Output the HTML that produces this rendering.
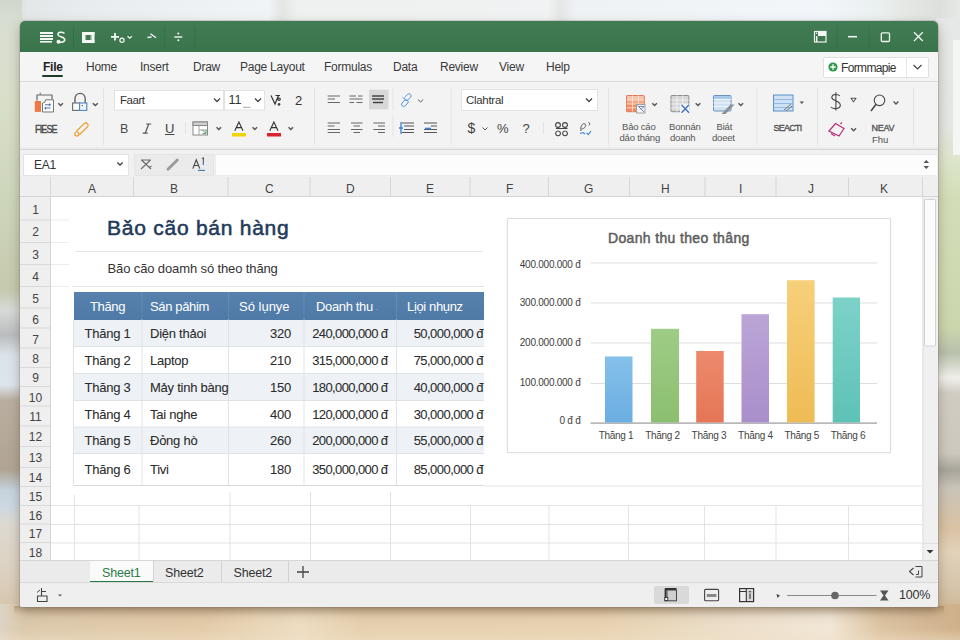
<!DOCTYPE html>
<html><head><meta charset="utf-8">
<style>
*{box-sizing:border-box;margin:0;padding:0}
html,body{width:960px;height:640px;overflow:hidden}
body{position:relative;font-family:"Liberation Sans",sans-serif;background:#e9ecea}
.a{position:absolute}
.t{position:absolute;white-space:nowrap;line-height:1}
svg{position:absolute;overflow:visible}
#win{position:absolute;left:20px;top:21px;width:918px;height:586px;background:#f3f3f3;border-radius:5px 5px 2px 2px;box-shadow:0 5px 12px rgba(70,50,30,.35),0 0 0 1px rgba(140,140,140,.30)}
.tab{font-size:12px;letter-spacing:-0.25px;color:#3a3a3a}
.sep{position:absolute;width:1px;background:#dcdcdc}
.gsep{position:absolute;width:1px;background:rgba(0,0,0,.12)}
.rb{font-size:12px;color:#333}
.sm{font-size:10px;color:#444}
.ch{font-size:12px;color:#555}
.hl{position:absolute;height:1px;background:#e2e2e2}
.vl{position:absolute;width:1px;background:#e2e2e2}
.rh{position:absolute;left:20px;width:31px;font-size:12px;color:#444;text-align:center;line-height:1}
.chd{position:absolute;top:183px;font-size:12px;color:#444;line-height:1}
.td{position:absolute;font-size:13px;letter-spacing:-0.25px;color:#2c2c2c;-webkit-text-stroke:0.08px #2c2c2c;line-height:1;white-space:nowrap}
.th{position:absolute;font-size:13px;letter-spacing:-0.35px;color:#fff;line-height:1;white-space:nowrap}
.yl{position:absolute;font-size:10px;letter-spacing:-0.25px;color:#3d3d3d;line-height:1;white-space:nowrap;text-align:right;width:80px}
.xl{position:absolute;font-size:10px;letter-spacing:-0.3px;color:#444;line-height:1;white-space:nowrap;text-align:center;width:50px}
.bar{position:absolute;width:28px}
</style></head><body>
<!-- background -->
<div class="a" style="left:0;top:0;width:960px;height:24px;background:linear-gradient(90deg,#cdd3ca 0,#d8ddd4 12px,#e4e7e8 28px,#eaedf0 100px,#f1f4f7 268px,#e3e6e3 282px,#eef1ef 298px,#f0f2f3 548px,#e4e7e5 560px,#eff2f4 576px,#f2f6fa 820px,#e9eeee 886px,#e6e9e6 900px,#dcdfdb 940px,#e6e9e6 960px)"></div>
<div class="a" style="left:0;top:0;width:22px;height:618px;background:linear-gradient(180deg,#d0d6cc 0,#d8ddd2 18px,#d9dfcf 58px,#d8dfc8 108px,#cdd6bb 198px,#c6caae 290px,#d6dad8 310px,#babdbe 335px,#dbe3ea 355px,#dde5ec 385px,#b9afa0 400px,#b0a594 470px,#c5d3de 490px,#cbd8e2 505px,#ddd9d0 525px,#dcd2c2 570px,#d8c8b2 600px,#d8c6ab 618px)"></div>
<div class="a" style="left:936px;top:18px;width:24px;height:600px;background:linear-gradient(180deg,#e5e8e6 0,#e3e6e3 110px,#dde5cc 140px,#d3ddb8 180px,#cbd6ad 310px,#b8c0ac 335px,#f0f0ea 360px,#d0ccc2 375px,#cdc8bd 435px,#a8a59c 452px,#c9c3b8 470px,#d9c3a4 510px,#e2d2ba 535px,#d5c3aa 570px,#cfb48f 600px)"></div>
<div class="a" style="left:953px;top:40px;width:7px;height:115px;background:#f4f6f3"></div>
<div class="a" style="left:0;top:604px;width:960px;height:36px;background:linear-gradient(90deg,#ddd3c5 0,#dcc9ad 22px,#e3cba8 200px,#eeddc2 300px,#e6d0ae 360px,#e8d2b0 600px,#ebdcc5 700px,#f2e7d7 830px,#dcc4a2 880px,#cfb08a 960px)"></div>
<div class="a" style="left:14px;top:606px;width:930px;height:10px;background:linear-gradient(180deg,rgba(120,85,45,.32),rgba(120,85,45,.08) 60%,rgba(120,85,45,0))"></div>
<div class="a" style="left:0;top:628px;width:960px;height:12px;background:linear-gradient(180deg,rgba(235,215,185,0),rgba(240,225,200,.45))"></div>
<div id="win"></div>
<!-- title bar -->
<div class="a" style="left:20px;top:21px;width:918px;height:31px;background:linear-gradient(180deg,#417c54,#3a744b);border-radius:5px 5px 0 0"></div>
<!-- title icons -->
<svg style="left:0;top:0" width="960" height="60">
 <g fill="#f4f7f4">
  <rect x="40" y="32" width="13" height="2"/><rect x="40" y="35" width="13" height="2"/><rect x="40" y="38" width="13" height="2"/><rect x="40" y="41" width="12" height="1.6"/>
 </g>
 <path d="M64.5 33.5 C62 31.5 57.5 32 58 34.8 C58.5 37 64.8 36.8 64.8 39.8 C64.8 42.6 59.5 43 57.5 41.2 M58.5 40.5 a1.3 1.3 0 1 0 0.1 0" fill="none" stroke="#f4f7f4" stroke-width="1.5"/>
 <rect x="73" y="27" width="1" height="20" fill="#2f6640" opacity=".6"/>
 <g fill="#f4f7f4">
  <rect x="82" y="32" width="12.5" height="3"/><rect x="82" y="40" width="12.5" height="3"/><rect x="82" y="32" width="3" height="11"/><rect x="91.5" y="32" width="3" height="11"/><rect x="85" y="35" width="1.2" height="5" opacity=".5"/><rect x="90.3" y="35" width="1.2" height="5" opacity=".5"/>
 </g>
 <path d="M111 36.8 H119 M115 33 V40.6" stroke="#f4f7f4" stroke-width="1.8" fill="none"/>
 <circle cx="122" cy="40.2" r="2.1" fill="none" stroke="#f4f7f4" stroke-width="1.2"/>
 <path d="M127.5 36.3 L129.7 38.3 L131.8 36.3" stroke="#f4f7f4" stroke-width="1.2" fill="none"/>
 <path d="M147.5 37.5 L151.5 37 M150.5 33.8 L156 37.8" stroke="#f4f7f4" stroke-width="1.3" fill="none"/>
 <rect x="164" y="27" width="1" height="20" fill="#2f6640" opacity=".5"/>
 <path d="M174.3 37 H182.3" stroke="#f4f7f4" stroke-width="1.4"/>
 <circle cx="178.3" cy="33.6" r="1" fill="#f4f7f4"/><circle cx="178.3" cy="40.3" r="1" fill="#f4f7f4"/>
 <rect x="194.5" y="27" width="1" height="20" fill="#2f6640" opacity=".4"/>
 <!-- right -->
 <rect x="814.5" y="31.5" width="11.5" height="10.5" fill="none" stroke="#eef3ee" stroke-width="1.2"/>
 <rect x="818" y="31.5" width="8" height="4.5" fill="#f4f7f4"/>
 <rect x="816" y="36" width="1.4" height="6" fill="#f4f7f4"/>
 <circle cx="816.6" cy="33.3" r="0.8" fill="#f4f7f4"/>
 <rect x="836.5" y="26" width="1" height="22" fill="#2f6640" opacity=".4"/>
 <path d="M848 36.7 H857" stroke="#f1f5f1" stroke-width="1.6"/>
 <rect x="868.5" y="26" width="1" height="22" fill="#2f6640" opacity=".3"/>
 <rect x="881.3" y="32.8" width="8.2" height="8.7" rx="1" fill="none" stroke="#f1f5f1" stroke-width="1.3"/>
 <path d="M914 32.2 L922.8 41 M922.8 32.2 L914 41" stroke="#f1f5f1" stroke-width="1.3"/>
</svg>
<!-- tabs -->
<div class="a" style="left:20px;top:52px;width:918px;height:29px;background:#f5f5f5"></div>
<div id="tabs">
  <div class="t tab" style="left:43px;top:61px;font-weight:bold;color:#222">File</div>
  <div class="a" style="left:42px;top:74.6px;width:21px;height:2px;background:#1d3b2b;border-radius:1px"></div>
  <div class="t tab" style="left:86px;top:61px">Home</div>
  <div class="t tab" style="left:140px;top:61px">Insert</div>
  <div class="t tab" style="left:193px;top:61px">Draw</div>
  <div class="t tab" style="left:240px;top:61px">Page Layout</div>
  <div class="t tab" style="left:324px;top:61px">Formulas</div>
  <div class="t tab" style="left:393px;top:61px">Data</div>
  <div class="t tab" style="left:440px;top:61px">Review</div>
  <div class="t tab" style="left:499px;top:61px">View</div>
  <div class="t tab" style="left:546px;top:61px">Help</div>
</div>
<div class="a" style="left:20px;top:81px;width:918px;height:1px;background:#dadada"></div>
<!-- ribbon -->
<svg style="left:0;top:0" width="960" height="160">
 <!-- group separators -->
 <g fill="#e3e3e3">
  <rect x="103" y="88" width="1" height="57"/>
  <rect x="314" y="88" width="1" height="57"/>
  <rect x="450.5" y="88" width="1" height="57"/>
  <rect x="608" y="88" width="1" height="57"/>
  <rect x="756.5" y="88" width="1" height="57"/>
  <rect x="817" y="88" width="1" height="57"/>
  <rect x="913" y="88" width="1" height="57"/>
  <rect x="185" y="122" width="1" height="12"/>
  <rect x="392.5" y="88" width="1" height="22"/>
  <rect x="392.5" y="115" width="1" height="22"/>
  <rect x="543" y="122" width="1" height="12"/>
 </g>
 <!-- clipboard: paste icon -->
 <path d="M37 100.5 V95 H52 V99.5" fill="none" stroke="#6a6a6a" stroke-width="1.2"/>
 <path d="M40.2 95 V92.6" stroke="#6a6a6a" stroke-width="1"/>
 <rect x="34.8" y="101" width="6.2" height="10.9" fill="#ee7746"/>
 <path d="M45.5 99.8 H53.5 V112 H42.5 V103 A3 3 0 0 0 45.5 99.8 Z" fill="#fafafa" stroke="#777" stroke-width="1"/>
 <path d="M45 104.8 H51 M44.5 108 H50.5 M49.5 103.5 V106 M45.5 107 V109.5" stroke="#4a7ac0" stroke-width="1.1"/>
 <path d="M58.3 103.2 L60.6 105.6 L62.9 103.2" fill="none" stroke="#555" stroke-width="1.4"/>
 <!-- lock icon -->
 <path d="M75 103 V98.8 C75 91.6 85.2 91.6 85.2 98.8 V103" fill="none" stroke="#5a5a5a" stroke-width="1.3"/>
 <rect x="72.6" y="103" width="7" height="7.4" fill="#fafafa" stroke="#6a6a6a" stroke-width="1.1"/>
 <rect x="79.6" y="103" width="7.2" height="7.4" fill="#f2f6fb" stroke="#4d84c8" stroke-width="1.1"/>
 <circle cx="82.3" cy="105.6" r="0.7" fill="#333"/>
 <path d="M92.8 103.2 L95.3 105.6 L97.8 103.2" fill="none" stroke="#555" stroke-width="1.4"/>
 <!-- pin icon -->
 <path d="M76.2 131.5 L84.5 123.3 A2.3 2.3 0 0 1 87.7 126.5 L79.4 134.7" fill="none" stroke="#f0a030" stroke-width="1.2"/>
 <path d="M85.5 123.5 L87 122" stroke="#f0a030" stroke-width="1"/>
 <circle cx="76.8" cy="134" r="2" fill="none" stroke="#f0a030" stroke-width="1.2"/>
 <!-- font boxes -->
 <rect x="114.5" y="90.5" width="109" height="19.5" fill="#fff" stroke="#e2e2e2" stroke-width="1"/>
 <rect x="224.5" y="90.5" width="40" height="19.5" fill="#fff" stroke="#e2e2e2" stroke-width="1"/>
 <path d="M214 98.5 L217 101.5 L220 98.5" fill="none" stroke="#444" stroke-width="1.3"/>
 <path d="M255 98.5 L258 101.5 L261 98.5" fill="none" stroke="#444" stroke-width="1.3"/>
 <rect x="243" y="106.8" width="7.5" height="1" fill="#aaa"/>
 <!-- B I U row -->
 <rect x="193" y="122" width="14.5" height="13" fill="#fff" stroke="#888" stroke-width="1"/>
 <rect x="193" y="122" width="14.5" height="3.5" fill="#d0d0d0" stroke="#888" stroke-width="1"/>
 <path d="M199 125.5 V135 M199.5 130 H207.5" stroke="#999" stroke-width="0.9"/>
 <path d="M202 129.5 L206 133.5 M206 130 V133.5 H202.5" stroke="#5aa070" stroke-width="1" fill="none"/>
 <path d="M216.5 127.3 L218.8 129.6 L221.1 127.3" fill="none" stroke="#555" stroke-width="1.4"/>
 <path d="M252.5 127.3 L254.8 129.6 L257.1 127.3" fill="none" stroke="#555" stroke-width="1.4"/>
 <path d="M288.5 127.3 L290.8 129.6 L293.1 127.3" fill="none" stroke="#555" stroke-width="1.4"/>
 <rect x="232" y="133" width="14" height="3.5" fill="#f0d400"/>
 <rect x="267" y="133" width="14" height="3.5" fill="#d9262e"/>
 <path d="M234.8 130.8 L238.9 122 L243 130.8 M236.3 127.6 H241.5" fill="none" stroke="#333" stroke-width="1.1"/>
 <path d="M269.8 130.8 L273.9 122 L278 130.8 M271.3 127.6 H276.5" fill="none" stroke="#333" stroke-width="1.1"/>
 <path d="M146.2 124 H151.2 M148.7 124 L145.2 133.2 M142.7 133.2 H147.7" fill="none" stroke="#555" stroke-width="1.2"/>
 <!-- V. icon -->
 <path d="M271 95.5 L275 104 L278.5 95.5 M275.5 95.5 H280 M279 98 A1.2 1.2 0 1 0 279.1 98 M279 103.5 A0.8 0.8 0 1 0 279.1 103.5" fill="none" stroke="#333" stroke-width="1.2"/>
 <!-- alignment -->
 <g stroke="#666" stroke-width="1.1">
  <path d="M327.7 96 H340 M327.7 99 H335 M327.7 102.5 H340"/>
  <path d="M349.5 96 H356 M358 96 H362.5 M349.5 99 H362.5 M349.5 102.5 H354 M356.5 102.5 H362.5"/>
  <path d="M327.7 123 H340 M327.7 126 H334.5 M327.7 129.5 H340 M327.7 132.5 H340"/>
  <path d="M351 123 H362.5 M353.5 126 H360 M351 129.5 H362.5 M353.5 132.5 H360"/>
  <path d="M373.3 123 H385 M378 126 H385 M373.3 129.5 H385 M378 132.5 H385"/>
 </g>
 <rect x="369" y="89.7" width="19.5" height="19.7" fill="#d8d8d8"/>
 <path d="M372 96 H384 M372 99 H384 M373 102.5 H383" stroke="#444" stroke-width="1.3"/>
 <!-- link icon -->
 <g transform="translate(406,100.2) scale(0.78) translate(-406,-100.5)"><path d="M405 96 L408 93 A2.6 2.6 0 0 1 411.8 96.8 L408 100.5 A2.6 2.6 0 0 1 404.5 97 M404.5 100.5 L401 104 A2.6 2.6 0 0 0 404.8 107.8 L408.5 104 A2.6 2.6 0 0 0 405 100.5" fill="none" stroke="#4a8ad8" stroke-width="1.2"/><path d="M401.5 96.5 L404 99" stroke="#4a8ad8" stroke-width="1"/></g>
 <path d="M418 99.5 L420.6 102 L423.2 99.5" fill="none" stroke="#555" stroke-width="1"/>
 <!-- indent icons -->
 <path d="M402 123 H414 M404 126 H414 M404 129.5 H414 M402 132.5 H414" stroke="#555" stroke-width="1.1"/>
 <path d="M401 122 V134 M399 128 H403" stroke="#3b80d8" stroke-width="1.3"/>
 <path d="M424 123 H437 M431 126 H437 M424 129.5 H437 M424 132.5 H437" stroke="#555" stroke-width="1.1"/>
 <path d="M425 128.5 H431" stroke="#3b80d8" stroke-width="1.6"/>
 <!-- number box -->
 <rect x="461.5" y="89.5" width="136" height="21" fill="#fff" stroke="#e2e2e2" stroke-width="1"/>
 <path d="M586 98.5 L589 101.5 L592 98.5" fill="none" stroke="#444" stroke-width="1.3"/>
 <path d="M482.5 127.5 L485 130 L487.5 127.5" fill="none" stroke="#555" stroke-width="1"/>
 <!-- 88 icon -->
 <g fill="none" stroke="#444" stroke-width="1.1">
  <circle cx="558" cy="125" r="2.4"/><circle cx="565" cy="125" r="2.4"/>
  <path d="M556 128.5 H567.5 M558 131 A2.4 2.4 0 1 0 558.1 131 M565 131 A2.4 2.4 0 1 0 565.1 131"/>
 </g>
 <path d="M581 131 C580 126 583 122.5 585 124 C587 126 584 129 581.5 129 M588.5 122.5 C590 122.5 590 124.5 589 125.5" fill="none" stroke="#555" stroke-width="1"/>
 <path d="M580 133.5 L583 132.5 L585 134 M586.5 133 L588.5 134.5 L591 131" fill="none" stroke="#3b80d8" stroke-width="1.1"/>
 <!-- style icons -->
 <g>
  <rect x="626.5" y="95.5" width="17.8" height="16.2" rx="0.8" fill="#ef8c66" stroke="#e07a55" stroke-width="1"/>
  <rect x="627" y="96" width="16.8" height="4.2" fill="#f7c4ac"/>
  <rect x="627" y="100.2" width="16.8" height="3.6" fill="#f4a583"/>
  <path d="M626.5 100.2 H644.3 M626.5 104 H644.3 M626.5 107.8 H644.3 M632.5 95.5 V111.7 M638.4 95.5 V111.7" stroke="#fde6dc" stroke-width="0.8"/>
  <rect x="636.5" y="104.5" width="8.5" height="8.5" fill="#f4f4f4" stroke="#9a9a9a" stroke-width="0.9"/>
  <path d="M637.5 105.5 L644 112 M639 106.5 H644 L641 109.5" fill="none" stroke="#5a7fb8" stroke-width="0.9"/>
  <path d="M652.3 103.2 L654.6 105.5 L656.9 103.2" fill="none" stroke="#555" stroke-width="1.4"/>
  <rect x="671" y="95.5" width="17.8" height="16.2" rx="0.8" fill="#d6d6d6" stroke="#8c8c8c" stroke-width="1"/>
  <path d="M671 100 H688.8 M671 104 H688.8 M671 108 H688.8 M676.9 95.5 V111.7 M682.8 95.5 V111.7" stroke="#f3f3f3" stroke-width="0.9"/>
  <rect x="680" y="104" width="9.5" height="9" fill="#f4f4f4"/>
  <path d="M681.5 104.8 L689 112.8 M689 104.8 L681.5 112.8" stroke="#3b6fc0" stroke-width="1.3"/>
  <path d="M695.7 103.2 L698 105.5 L700.3 103.2" fill="none" stroke="#555" stroke-width="1.4"/>
  <rect x="713.5" y="95.5" width="17.5" height="15.5" rx="0.8" fill="#cfe1f3" stroke="#6a93bd" stroke-width="1"/>
  <rect x="714" y="96" width="16.5" height="3.5" fill="#a9c9ea"/>
  <path d="M713.5 99.5 H731 M713.5 103 H731 M713.5 106.5 H731" stroke="#f5f9fd" stroke-width="0.9"/>
  <path d="M721.5 114 L730.5 104.5 L734.5 104.5 L725.5 114 Z" fill="#8a8f94"/>
  <path d="M738.5 103.2 L740.8 105.5 L743.1 103.2" fill="none" stroke="#555" stroke-width="1.4"/>
 </g>
 <!-- SEACTI icon -->
 <rect x="773.5" y="95" width="19.5" height="16" fill="#cfe2f5" stroke="#5b8fc7" stroke-width="1"/>
 <path d="M773.5 99.5 H793 M773.5 103.5 H793 M773.5 107.5 H793" stroke="#8db6e0" stroke-width="0.9"/>
 <path d="M784 110 L791 104 M786 111 L792 106" stroke="#777" stroke-width="1"/>
 <path d="M799.5 101.5 H804 L801.75 104 Z" fill="#555"/>
 <!-- $ magnifier -->
 <path d="M839.8 96 C838.5 93.8 831.8 93.6 831.8 97.6 C831.8 101 840.3 100.8 840.3 105.2 C840.3 109.2 833 109.4 830.8 107 M835.9 92.2 V110.5" fill="none" stroke="#444" stroke-width="1.1"/>
 <path d="M851 98.3 H856 L853.5 101.8 Z" fill="#fff" stroke="#555" stroke-width="1.1" stroke-linejoin="round"/>
 <circle cx="879.5" cy="100.3" r="5.3" fill="none" stroke="#444" stroke-width="1.1"/>
 <path d="M876 104.3 L871 111" stroke="#444" stroke-width="1.5"/>
 <path d="M893.6 101.6 L896 104 L898.4 101.6" fill="none" stroke="#555" stroke-width="1.4"/>
 <!-- pink tag -->
 <path d="M829 131 L835.5 123.5 L844 128.5 L839 136 Z" fill="none" stroke="#b8307a" stroke-width="1.2"/>
 <path d="M831 133.5 L835 136 M840.5 124 L842 122.5" stroke="#b8307a" stroke-width="1.1"/>
 <path d="M851.2 128.3 L853.6 130.8 L856 128.3" fill="none" stroke="#555" stroke-width="1.4"/>
</svg>
<div class="t" style="left:120px;top:95px;font-size:11.5px;color:#333;letter-spacing:-0.45px">Faart</div>
<div class="t" style="left:228.5px;top:94px;font-size:12.5px;color:#333">11</div>
<div class="t" style="left:295px;top:94px;font-size:13px;color:#333">2</div>
<div class="t" style="left:120px;top:122.5px;font-size:12.5px;color:#4a4a4a">B</div>
<div class="t" style="left:165px;top:121.5px;font-size:13px;color:#444;text-decoration:underline">U</div>
<div class="t" style="left:35px;top:125px;font-size:9px;color:#4a4a4a;-webkit-text-stroke:0.35px #4a4a4a;letter-spacing:-0.85px;transform:scaleY(1.2);transform-origin:0 0">FIESE</div>
<div class="t" style="left:466px;top:94.5px;font-size:11.5px;color:#333;letter-spacing:-0.3px">Clahtral</div>
<div class="t" style="left:467.5px;top:121px;font-size:14px;color:#444">$</div>
<div class="t" style="left:497px;top:121.5px;font-size:13px;color:#444">%</div>
<div class="t" style="left:522.5px;top:121.5px;font-size:13px;color:#444">?</div>
<div class="t" style="left:622px;top:122px;font-size:9.5px;color:#555;letter-spacing:-0.2px">Bảo cáo</div>
<div class="t" style="left:619.5px;top:132.5px;font-size:9.5px;color:#555;letter-spacing:-0.2px">dảo tháng</div>
<div class="t" style="left:669px;top:122px;font-size:9.5px;color:#555;letter-spacing:-0.2px">Bonnán</div>
<div class="t" style="left:670px;top:132.5px;font-size:9.5px;color:#555;letter-spacing:-0.2px">doanh</div>
<div class="t" style="left:716.5px;top:122px;font-size:9.5px;color:#555;letter-spacing:-0.2px">Biát</div>
<div class="t" style="left:712px;top:132.5px;font-size:9.5px;color:#555;letter-spacing:-0.2px">doeet</div>
<div class="t" style="left:773.5px;top:123px;font-size:9px;color:#505050;-webkit-text-stroke:0.3px #505050;letter-spacing:-0.75px;transform:scaleY(1.1);transform-origin:0 0">SEACTI</div>
<div class="t" style="left:871.5px;top:123px;font-size:9px;color:#505050;-webkit-text-stroke:0.3px #505050;letter-spacing:-0.3px;transform:scaleY(1.1);transform-origin:0 0">NEAV</div>
<div class="t" style="left:872px;top:135px;font-size:9.5px;color:#505050">Fhu</div>
<!-- Formmapie -->
<div class="a" style="left:823px;top:56.5px;width:106px;height:21px;background:#fff;border:1px solid #e0e0e0;border-radius:2px"></div>
<div class="a" style="left:906px;top:57px;width:1px;height:20px;background:#e6e6e6"></div>
<svg style="left:0;top:0" width="960" height="90">
 <circle cx="833" cy="67" r="4.6" fill="#2e9a4e"/>
 <path d="M833 64.3 V69.7 M830.3 67 H835.7" stroke="#fff" stroke-width="1.3"/>
 <path d="M913.5 65 L917.5 69 L921.5 65" fill="none" stroke="#444" stroke-width="1.2"/>
</svg>
<div class="t" style="left:841px;top:61.5px;font-size:12px;color:#333;letter-spacing:-0.65px">Formmapie</div>
<!-- ribbon bottom -->
<div class="a" style="left:20px;top:146px;width:918px;height:3px;background:linear-gradient(180deg,rgba(0,0,0,0),rgba(0,0,0,.04))"></div>
<div class="a" style="left:20px;top:149px;width:918px;height:1px;background:#d6d6d6"></div>
<!-- formula bar -->
<div class="a" style="left:20px;top:150px;width:918px;height:27px;background:#f1f1f1"></div>
<div class="a" style="left:133.5px;top:153.5px;width:80px;height:22px;background:#ebebeb;border:1px solid #e4e4e4"></div>
<!-- grid -->
<div class="a" style="left:20px;top:177px;width:918px;height:383px;background:#fff"></div>
<!-- formula bar contents -->
<div class="a" style="left:23px;top:153.5px;width:106px;height:22px;background:#fff;border:1px solid #e4e4e4"></div>
<div class="t" style="left:34px;top:158.5px;font-size:12px;color:#333;letter-spacing:-0.3px">EA1</div>
<div class="a" style="left:215px;top:153.5px;width:722px;height:22px;background:#fcfcfc;border:1px solid #ececec;border-right:none"></div>
<svg style="left:0;top:140px" width="960" height="40">
 <path d="M117.3 22.5 L120 25 L122.7 22.5" fill="none" stroke="#444" stroke-width="1.4"/>
 <path d="M141.5 20 L151 29 M150.5 20 L141 29 M141 20 H150.8 M149 27.5 L151.5 26" fill="none" stroke="#6a6a6a" stroke-width="1.1"/>
 <path d="M168 29.3 L177.3 20" stroke="#9a9a9a" stroke-width="2.8" stroke-linecap="round"/>
 <path d="M192.8 28.6 L196.3 19.7 L199.8 28.6 M194 25.5 H198.6" fill="none" stroke="#444" stroke-width="1.1"/>
 <path d="M202 18.8 L203.4 18 V25" fill="none" stroke="#555" stroke-width="1.1"/><path d="M203.4 21.5 V25" stroke="#4a86c8" stroke-width="1.1"/>
 <path d="M198 30.4 H205" stroke="#3a78b0" stroke-width="1.1"/>
 <path d="M923.5 23 L926.3 20 L929 23 Z M923.5 26 L926.3 29 L929 26 Z" fill="#555"/>
</svg>
<!-- column header -->
<div class="a" style="left:20px;top:177px;width:918px;height:20px;background:#efefef;border-bottom:1px solid #d4d4d4"></div>
<div class="a" style="left:20px;top:197px;width:31px;height:363px;background:#efefef;border-right:1px solid #d4d4d4"></div>
<svg style="left:0;top:0" width="960" height="640">
 <g fill="#d6d6d6">
  <rect x="50" y="177" width="1" height="20"/><rect x="133" y="177" width="1" height="20"/><rect x="227.5" y="177" width="1" height="20"/>
  <rect x="309.5" y="177" width="1" height="20"/><rect x="390" y="177" width="1" height="20"/><rect x="469.5" y="177" width="1" height="20"/>
  <rect x="548" y="177" width="1" height="20"/><rect x="629" y="177" width="1" height="20"/><rect x="704.5" y="177" width="1" height="20"/>
  <rect x="775.5" y="177" width="1" height="20"/><rect x="848" y="177" width="1" height="20"/><rect x="922" y="177" width="1" height="20"/>
 </g>
 <g fill="#d9d9d9">
  <rect x="20" y="219.5" width="30" height="1"/><rect x="20" y="242" width="30" height="1"/><rect x="20" y="264" width="30" height="1"/>
  <rect x="20" y="286" width="30" height="1"/><rect x="20" y="307.5" width="30" height="1"/><rect x="20" y="327.5" width="30" height="1"/>
  <rect x="20" y="347.5" width="30" height="1"/><rect x="20" y="367" width="30" height="1"/><rect x="20" y="386" width="30" height="1"/>
  <rect x="20" y="405.5" width="30" height="1"/><rect x="20" y="425.5" width="30" height="1"/><rect x="20" y="446" width="30" height="1"/>
  <rect x="20" y="467" width="30" height="1"/><rect x="20" y="486" width="30" height="1"/><rect x="20" y="505" width="30" height="1"/>
  <rect x="20" y="523.5" width="30" height="1"/><rect x="20" y="542" width="30" height="1"/>
 </g>
 <!-- faint stubs -->
 <g fill="#ececec">
  <rect x="51" y="219.5" width="18" height="1"/><rect x="51" y="242" width="18" height="1"/><rect x="51" y="264" width="18" height="1"/><rect x="51" y="286" width="18" height="1"/>
 </g>
 <!-- lower grid -->
 <g fill="#e3e3e3">
  <rect x="51" y="505" width="871" height="1"/><rect x="51" y="524" width="871" height="1"/><rect x="51" y="542.5" width="871" height="1"/>
  <rect x="484" y="485.5" width="438" height="1"/>
  <rect x="74" y="495" width="1" height="65"/><rect x="138.5" y="505" width="1" height="55"/><rect x="229.5" y="492" width="1" height="68"/>
  <rect x="310" y="492" width="1" height="68"/><rect x="390" y="492" width="1" height="68"/><rect x="470" y="505" width="1" height="55"/>
  <rect x="548.5" y="505" width="1" height="55"/><rect x="628" y="505" width="1" height="55"/><rect x="704" y="505" width="1" height="55"/>
  <rect x="775.5" y="505" width="1" height="55"/><rect x="848" y="505" width="1" height="55"/>
  <rect x="76" y="251" width="406" height="1"/><rect x="72" y="286" width="412" height="1"/>
 </g>
 <!-- scrollbar -->
 <rect x="922.5" y="197" width="15.5" height="363" fill="#f0f0f0"/>
 <rect x="922.5" y="197" width="1" height="363" fill="#dedede"/>
 <rect x="924.5" y="199.5" width="11" height="146.5" rx="1" fill="#fbfbfb" stroke="#d2d2d2" stroke-width="1"/>
 <rect x="922.5" y="543" width="15.5" height="1" fill="#e0e0e0"/>
 <path d="M926.5 550 H933.5 L930 553.5 Z" fill="#333"/>
</svg>
<div class="chd" style="left:88px">A</div>
<div class="chd" style="left:170px">B</div>
<div class="chd" style="left:265px">C</div>
<div class="chd" style="left:346px">D</div>
<div class="chd" style="left:426px">E</div>
<div class="chd" style="left:506px">F</div>
<div class="chd" style="left:584px">G</div>
<div class="chd" style="left:661px">H</div>
<div class="chd" style="left:739px">I</div>
<div class="chd" style="left:808px">J</div>
<div class="chd" style="left:880px">K</div>
<div class="rh" style="top:204px">1</div>
<div class="rh" style="top:226px">2</div>
<div class="rh" style="top:249px">3</div>
<div class="rh" style="top:271px">4</div>
<div class="rh" style="top:293px">5</div>
<div class="rh" style="top:314px">6</div>
<div class="rh" style="top:334px">7</div>
<div class="rh" style="top:353px">8</div>
<div class="rh" style="top:372px">9</div>
<div class="rh" style="top:392px">10</div>
<div class="rh" style="top:411px">11</div>
<div class="rh" style="top:431px">12</div>
<div class="rh" style="top:452px">13</div>
<div class="rh" style="top:472px">14</div>
<div class="rh" style="top:491px">15</div>
<div class="rh" style="top:510px">16</div>
<div class="rh" style="top:528px">17</div>
<div class="rh" style="top:547px">18</div>
<!-- title -->
<div class="t" style="left:107px;top:217px;font-size:21px;color:#1f3a5a;-webkit-text-stroke:0.55px #1f3a5a;letter-spacing:0.75px">Bǎo cão bán hàng</div>
<div class="t" style="left:107.5px;top:262px;font-size:13px;letter-spacing:-0.12px;color:#333">Bão cão doamh só theo thăng</div>
<!-- table -->
<div class="a" style="left:73.5px;top:291.5px;width:410px;height:28px;background:linear-gradient(180deg,#5681ad,#4f79a6)"></div>
<div class="a" style="left:73.5px;top:319.5px;width:410px;height:27px;background:#eef2f6"></div>
<div class="a" style="left:73.5px;top:373.5px;width:410px;height:27px;background:#eef2f6"></div>
<div class="a" style="left:73.5px;top:427px;width:410px;height:26.5px;background:#eef2f6"></div>
<svg style="left:0;top:0" width="960" height="640">
 <g fill="#dfe3e8">
  <rect x="73.5" y="346" width="410" height="1"/><rect x="73.5" y="373" width="410" height="1"/><rect x="73.5" y="400" width="410" height="1"/>
  <rect x="73.5" y="426.5" width="410" height="1"/><rect x="73.5" y="453" width="410" height="1"/>
  <rect x="73.5" y="485" width="410" height="1" fill="#d4d8dd"/>
  <rect x="141.5" y="292" width="1" height="27.5" fill="#ffffff" opacity=".10"/><rect x="228" y="292" width="1" height="27.5" fill="#ffffff" opacity=".10"/><rect x="303.5" y="292" width="1" height="27.5" fill="#ffffff" opacity=".10"/><rect x="396" y="292" width="1" height="27.5" fill="#ffffff" opacity=".10"/>
  <rect x="73" y="319.5" width="1" height="166"/>
  <rect x="141.5" y="319.5" width="1" height="166"/><rect x="228" y="319.5" width="1" height="166"/>
  <rect x="303.5" y="319.5" width="1" height="166"/><rect x="396" y="319.5" width="1" height="166"/>
 </g>
</svg>
<div class="th" style="left:90px;top:300px">Thăng</div>
<div class="th" style="left:150px;top:300px">Sán pǎhim</div>
<div class="th" style="left:239px;top:300px;letter-spacing:0px">Só lụnye</div>
<div class="th" style="left:316px;top:300px">Doanh thu <span style="font-size:6px">·</span></div>
<div class="th" style="left:407px;top:300px">Lịọi nhụnz</div>
<div class="td" style="left:84.5px;top:327px">Thăng 1</div>
<div class="td" style="left:150px;top:327px">Diện thảoi</div>
<div class="td" style="left:267px;top:327px;width:24px;text-align:right">320</div>
<div class="td" style="left:297.5px;letter-spacing:-0.6px;top:327px;width:90px;text-align:right">240,000,000 đ</div>
<div class="td" style="left:379px;letter-spacing:-0.55px;top:327px;width:104px;text-align:right">50,000,000 đ</div>
<div class="td" style="left:84.5px;top:354px">Thăng 2</div>
<div class="td" style="left:150px;top:354px">Laptop</div>
<div class="td" style="left:267px;top:354px;width:24px;text-align:right">210</div>
<div class="td" style="left:297.5px;letter-spacing:-0.6px;top:354px;width:90px;text-align:right">315,000,000 đ</div>
<div class="td" style="left:379px;letter-spacing:-0.55px;top:354px;width:104px;text-align:right">75,000,000 đ</div>
<div class="td" style="left:84.5px;top:381px">Thăng 3</div>
<div class="td" style="left:150px;top:381px">Mảy tinh bàng</div>
<div class="td" style="left:267px;top:381px;width:24px;text-align:right">150</div>
<div class="td" style="left:297.5px;letter-spacing:-0.6px;top:381px;width:90px;text-align:right">180,000,000 đ</div>
<div class="td" style="left:379px;letter-spacing:-0.55px;top:381px;width:104px;text-align:right">40,000,000 đ</div>
<div class="td" style="left:84.5px;top:407.5px">Thăng 4</div>
<div class="td" style="left:150px;top:407.5px">Tai nghe</div>
<div class="td" style="left:267px;top:407.5px;width:24px;text-align:right">400</div>
<div class="td" style="left:297.5px;letter-spacing:-0.6px;top:407.5px;width:90px;text-align:right">120,000,000 đ</div>
<div class="td" style="left:379px;letter-spacing:-0.55px;top:407.5px;width:104px;text-align:right">30,000,000 đ</div>
<div class="td" style="left:84.5px;top:434px">Thăng 5</div>
<div class="td" style="left:150px;top:434px">Đỏng hò</div>
<div class="td" style="left:267px;top:434px;width:24px;text-align:right">260</div>
<div class="td" style="left:297.5px;letter-spacing:-0.6px;top:434px;width:90px;text-align:right">200,000,000 đ</div>
<div class="td" style="left:379px;letter-spacing:-0.55px;top:434px;width:104px;text-align:right">55,000,000 đ</div>
<div class="td" style="left:84.5px;top:462.5px">Thăng 6</div>
<div class="td" style="left:150px;top:462.5px">Tivi</div>
<div class="td" style="left:267px;top:462.5px;width:24px;text-align:right">180</div>
<div class="td" style="left:297.5px;letter-spacing:-0.6px;top:462.5px;width:90px;text-align:right">350,000,000 đ</div>
<div class="td" style="left:379px;letter-spacing:-0.55px;top:462.5px;width:104px;text-align:right">85,000,000 đ</div>
<!-- chart -->
<div class="a" style="left:507px;top:217.5px;width:383.5px;height:235.5px;background:#fff;border:1px solid #dedede;box-shadow:0 0 2px rgba(0,0,0,.05)"></div>
<div class="t" style="left:608px;top:231px;font-size:14px;color:#5e5e5e;-webkit-text-stroke:0.5px #5e5e5e;letter-spacing:0.35px">Doanh thu theo thâng</div>
<svg style="left:0;top:0" width="960" height="640">
 <g fill="#dedede">
  <rect x="590.5" y="262.5" width="286.5" height="1"/><rect x="590.5" y="302.5" width="286.5" height="1"/>
  <rect x="590.5" y="342.5" width="286.5" height="1"/><rect x="590.5" y="383" width="286.5" height="1"/>
 </g>
 <rect x="590.5" y="422.5" width="286.5" height="1.2" fill="#9a9a9a"/>
 <defs>
  <linearGradient id="g1" x1="0" y1="0" x2="0" y2="1"><stop offset="0" stop-color="#86c0ea"/><stop offset="1" stop-color="#6aaee2"/></linearGradient>
  <linearGradient id="g2" x1="0" y1="0" x2="0" y2="1"><stop offset="0" stop-color="#9fcc86"/><stop offset="1" stop-color="#8bbf6f"/></linearGradient>
  <linearGradient id="g3" x1="0" y1="0" x2="0" y2="1"><stop offset="0" stop-color="#ec8a6c"/><stop offset="1" stop-color="#e57656"/></linearGradient>
  <linearGradient id="g4" x1="0" y1="0" x2="0" y2="1"><stop offset="0" stop-color="#bba5d6"/><stop offset="1" stop-color="#a98fcb"/></linearGradient>
  <linearGradient id="g5" x1="0" y1="0" x2="0" y2="1"><stop offset="0" stop-color="#f6d07a"/><stop offset="1" stop-color="#efbb55"/></linearGradient>
  <linearGradient id="g6" x1="0" y1="0" x2="0" y2="1"><stop offset="0" stop-color="#7dd2c8"/><stop offset="1" stop-color="#5ec2b6"/></linearGradient>
 </defs>
 <rect x="605" y="356.5" width="27.5" height="66" fill="url(#g1)"/>
 <rect x="651" y="328.8" width="28" height="93.7" fill="url(#g2)"/>
 <rect x="696.2" y="351" width="27.5" height="71.5" fill="url(#g3)"/>
 <rect x="741.5" y="314.2" width="27.5" height="108.3" fill="url(#g4)"/>
 <rect x="787" y="280.2" width="27.6" height="142.3" fill="url(#g5)"/>
 <rect x="832.7" y="297.5" width="27.3" height="125" fill="url(#g6)"/>
</svg>
<div class="yl" style="left:500.5px;top:259.5px">400.000.000 đ</div>
<div class="yl" style="left:500.5px;top:298px">300.000.000 đ</div>
<div class="yl" style="left:500.5px;top:338px">200.000.000 đ</div>
<div class="yl" style="left:500.5px;top:377.5px">100.000.000 đ</div>
<div class="yl" style="left:500.5px;top:415.5px">0 đ đ</div>
<div class="xl" style="left:591.1px;top:431px">Thăng 1</div>
<div class="xl" style="left:637.5px;top:431px">Thăng 2</div>
<div class="xl" style="left:683.9px;top:431px">Thăng 3</div>
<div class="xl" style="left:730.4px;top:431px">Thăng 4</div>
<div class="xl" style="left:776.8px;top:431px">Thăng 5</div>
<div class="xl" style="left:823.1px;top:431px">Thăng 6</div>
<!-- sheet tabs -->
<div class="a" style="left:20px;top:560px;width:918px;height:22px;background:#ebebeb;border-top:1px solid #d6d6d6"></div>
<div class="a" style="left:90px;top:561px;width:63px;height:21px;background:#fafafa"></div>
<div class="a" style="left:90px;top:580.5px;width:63px;height:2px;background:#2a7a46"></div>
<div class="a" style="left:152.5px;top:561px;width:1px;height:22px;background:#d2d2d2"></div>
<div class="a" style="left:220.5px;top:561px;width:1px;height:22px;background:#d2d2d2"></div>
<div class="a" style="left:287.5px;top:561px;width:1px;height:22px;background:#d2d2d2"></div>
<div class="t" style="left:102px;top:567px;font-size:12.5px;color:#2a7a46;letter-spacing:-0.2px">Sheet1</div>
<div class="t" style="left:165px;top:567px;font-size:12.5px;color:#333;letter-spacing:-0.2px">Sheet2</div>
<div class="t" style="left:233.5px;top:567px;font-size:12.5px;color:#333;letter-spacing:-0.2px">Sheet2</div>
<svg style="left:0;top:0" width="960" height="640">
 <path d="M303 566 V578 M297 572 H309" stroke="#444" stroke-width="1.3"/>
 <path d="M913.5 568 L909.5 571.5 L913.5 575" fill="none" stroke="#444" stroke-width="1.1"/>
 <path d="M915.5 566.5 H922 V577 H915.5 M918.5 570.5 V574.5 H916" fill="none" stroke="#444" stroke-width="1"/>
</svg>
<!-- status -->
<div class="a" style="left:20px;top:582px;width:918px;height:25px;background:#efefef;border-top:1px solid #d9d9d9;border-radius:0 0 2px 2px"></div>
<div class="a" style="left:653.5px;top:585.5px;width:35.5px;height:18.5px;background:#d9d9d9;border-radius:2px"></div>
<svg style="left:0;top:0" width="960" height="640">
 <path d="M41.5 588 V596 M41.5 591.5 H46 M37.5 596 H47 V601.5 H37.5 Z" fill="none" stroke="#444" stroke-width="1.1"/>
 <path d="M37 592.5 L40 590" stroke="#444" stroke-width="1"/>
 <path d="M58 594.5 H62 L60 596.5 Z" fill="#555"/>
 <rect x="667" y="590" width="9.5" height="10.8" fill="#cfcfcf" stroke="#444" stroke-width="1"/>
 <path d="M665.5 588.5 V601.5 M665 589 H676.5" stroke="#333" stroke-width="1.8"/>
 <rect x="664.8" y="597.5" width="3" height="3" fill="#fff" stroke="#333" stroke-width="0.9"/>
 <rect x="704.6" y="589.4" width="14" height="11.4" rx="1" fill="none" stroke="#444" stroke-width="1.1"/>
 <rect x="706.8" y="594" width="9.6" height="3" fill="#888"/>
 <rect x="739.6" y="588.6" width="14" height="13" fill="none" stroke="#333" stroke-width="1.2"/>
 <rect x="747" y="589.5" width="6" height="11.5" fill="#d9d9d9"/>
 <path d="M746.3 588.6 V601.6 M739.6 591.5 H746.3 M750 593.5 V599 M748.8 591.8 H751.2" fill="none" stroke="#333" stroke-width="1.1"/>
 <path d="M776.5 594 L780 595.5 L777.5 598 Z" fill="#444"/>
 <rect x="787" y="595" width="89.5" height="1" fill="#8a8a8a"/>
 <circle cx="835" cy="595.5" r="3.8" fill="#666"/>
 <path d="M880 590.5 H888.5 L885 595.5 L888.5 600.5 H880 L883.5 595.5 Z" fill="#555"/>
</svg>
<div class="t" style="left:899px;top:589px;font-size:12.5px;color:#333;letter-spacing:-0.2px">100%</div>
</body></html>
